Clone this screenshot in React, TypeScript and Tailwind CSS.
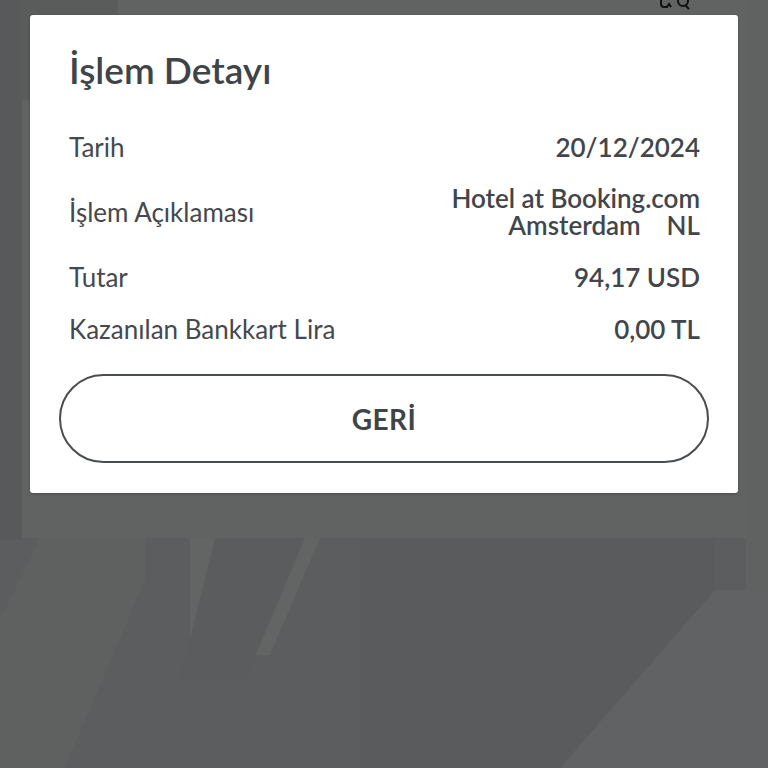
import React from "react";

function Row({ label, children }: { label: string; children: React.ReactNode }) {
  return (
    <div className="flex items-center justify-between">
      <span className="text-[26px] leading-[30px] text-[#45494d]">{label}</span>
      <span className="text-right text-[26px] leading-[27px] font-semibold text-[#42464a] whitespace-pre">{children}</span>
    </div>
  );
}

export default function App() {
  return (
    <div
      className="relative w-[768px] h-[768px] overflow-hidden bg-[#5c5d5e]"
      style={{ fontFamily: "Lato, 'Open Sans', sans-serif" }}
    >
      {/* dimmed background app */}
      <div className="absolute left-0 top-0 w-[768px] h-[768px]">
        <div className="absolute left-0 top-0 w-[22px] h-[540px] bg-[#58595a]" />
        <div className="absolute left-[22px] top-0 w-[724px] h-[538px] bg-[#616262]" />
        <div className="absolute left-[117px] top-0 w-px h-[15px] bg-[#6a6a6a]" />
        <div className="absolute left-[22px] top-[0px] w-[96px] h-[100px] bg-[#5a5b5b]" />
        <svg className="absolute left-0 top-0" width="768" height="768" viewBox="0 0 768 768">
          <polygon points="40,538 145,538 145,580 65,768 0,768 0,620" fill="#5f6060" />
          <polygon points="190,538 320,538 270,655 190,655" fill="#636464" />
          <polygon points="215,538 305,538 245,680 180,680" fill="#5b5c5d" />
          <polygon points="360,538 715,538 715,590 560,768 360,768" fill="#5a5b5c" />
          <polygon points="715,590 768,590 768,768 560,768" fill="#616263" />
          <rect x="746" y="0" width="22" height="590" fill="#606161" />
        </svg>
        <svg className="absolute left-[658px] top-0" width="36" height="10" viewBox="0 0 36 10">
          <path d="M3 0 L3 4 Q3 7 6 7 L9 7 L11 4 L13 7" stroke="#111" strokeWidth="2" fill="none" />
          <circle cx="25" cy="1" r="5" stroke="#111" strokeWidth="2" fill="none" />
          <path d="M27 5 L31 9" stroke="#111" strokeWidth="2" />
        </svg>
      </div>

      {/* modal */}
      <div className="absolute left-[30px] top-[15px] w-[708px] h-[478px] bg-white rounded-[3px] shadow-[0_1px_3px_rgba(0,0,0,0.25)]">
        <div className="pl-[39px] pr-[38px] pt-[33px]">
          <h1 className="text-[37px] leading-[44px] font-semibold text-[#3f4448]">İşlem Detayı</h1>
          <div className="mt-[40px] flex flex-col">
            <Row label="Tarih">20/12/2024</Row>
            <div className="mt-[23px]">
              <Row label="İşlem Açıklaması">
                {"Hotel at Booking.com\nAmsterdam    NL"}
              </Row>
            </div>
            <div className="mt-[23px]">
              <Row label="Tutar">94,17 USD</Row>
            </div>
            <div className="mt-[22px]">
              <Row label="Kazanılan Bankkart Lira">0,00 TL</Row>
            </div>
          </div>
        </div>
        <div className="px-[29px] mt-[30px]">
          <button className="w-full h-[89px] rounded-full border-2 border-[#4a4d50] flex items-center justify-center text-[28px] font-bold text-[#3f4448] tracking-[0.5px]">
            GERİ
          </button>
        </div>
      </div>
    </div>
  );
}
